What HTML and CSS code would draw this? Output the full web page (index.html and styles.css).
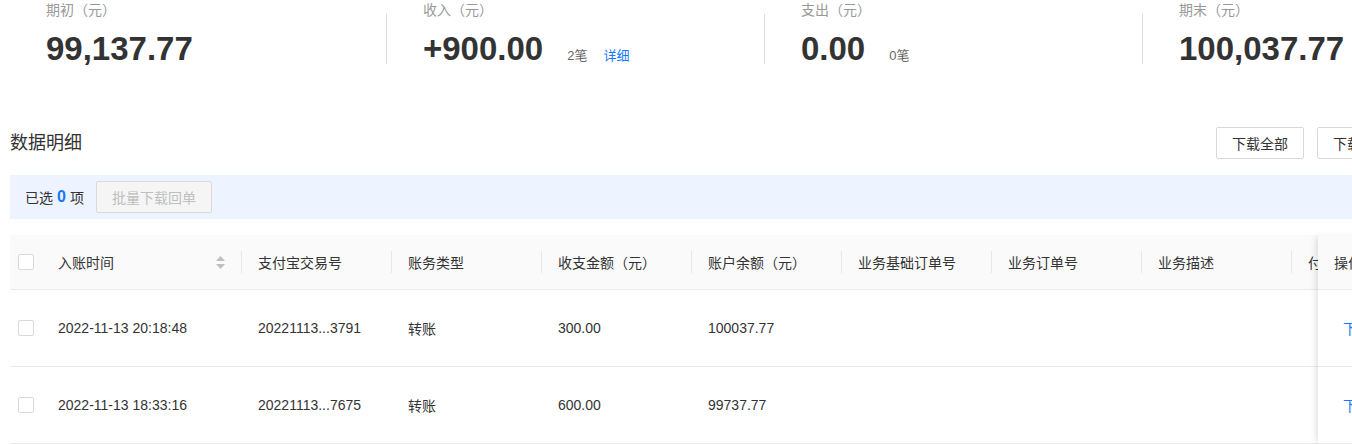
FILE: index.html
```html
<!DOCTYPE html>
<html lang="zh-CN">
<head>
    <meta charset="UTF-8">
    <meta name="viewport" content="width=device-width, initial-scale=1.0">
    <title>账单明细</title>
    <link rel="stylesheet" href="styles.css">
</head>
<body>

    <div class="page">
        <!-- Summary -->
        <div class="stats">
            <div class="stat">
                <div class="stat-label">期初（元）</div>
                <div class="stat-row"><span class="stat-value">99,137.77</span></div>
            </div>
            <div class="stat">
                <div class="stat-label">收入（元）</div>
                <div class="stat-row">
                    <span class="stat-value">+900.00</span>
                    <span class="stat-count">2笔</span>
                    <a class="link">详细</a>
                </div>
            </div>
            <div class="stat">
                <div class="stat-label">支出（元）</div>
                <div class="stat-row">
                    <span class="stat-value">0.00</span>
                    <span class="stat-count">0笔</span>
                </div>
            </div>
            <div class="stat">
                <div class="stat-label">期末（元）</div>
                <div class="stat-row"><span class="stat-value">100,037.77</span></div>
            </div>
        </div>

        <!-- Detail header -->
        <div class="section-head">
            <h2>数据明细</h2>
            <div class="actions">
                <button class="btn">下载全部</button>
                <button class="btn">下载回单</button>
            </div>
        </div>

        <div class="select-bar">
            <span>已选</span><span class="select-count">0</span><span>项</span>
            <button class="btn btn-disabled" disabled>批量下载回单</button>
        </div>

        <!-- Table -->
        <div class="table-wrap">
            <div class="table-main">
                <table>
                    <colgroup>
                        <col style="width: 32px">
                        <col style="width: 200px">
                        <col style="width: 150px">
                        <col style="width: 150px">
                        <col style="width: 150px">
                        <col style="width: 150px">
                        <col style="width: 150px">
                        <col style="width: 150px">
                        <col style="width: 150px">
                        <col style="width: 150px">
                    </colgroup>
                    <thead>
                        <tr>
                            <th class="cell-check"><span class="checkbox"></span></th>
                            <th><div class="th-cell">入账时间
                                <svg class="sorter" width="9" height="13" viewBox="0 0 9 13">
                                    <path d="M4.5 0 L9 5 L0 5 Z" fill="#bfbfbf"/>
                                    <path d="M0 8 L9 8 L4.5 13 Z" fill="#bfbfbf"/>
                                </svg>
                            </div></th>
                            <th><div class="th-cell">支付宝交易号</div></th>
                            <th><div class="th-cell">账务类型</div></th>
                            <th><div class="th-cell">收支金额（元）</div></th>
                            <th><div class="th-cell">账户余额（元）</div></th>
                            <th><div class="th-cell">业务基础订单号</div></th>
                            <th><div class="th-cell">业务订单号</div></th>
                            <th><div class="th-cell">业务描述</div></th>
                            <th><div class="th-cell">付款方信息</div></th>
                        </tr>
                    </thead>
                    <tbody>
                        <tr>
                            <td class="cell-check"><span class="checkbox"></span></td>
                            <td>2022-11-13 20:18:48</td>
                            <td>20221113...3791</td>
                            <td>转账</td>
                            <td>300.00</td>
                            <td>100037.77</td>
                            <td></td>
                            <td></td>
                            <td></td>
                            <td></td>
                        </tr>
                        <tr>
                            <td class="cell-check"><span class="checkbox"></span></td>
                            <td>2022-11-13 18:33:16</td>
                            <td>20221113...7675</td>
                            <td>转账</td>
                            <td>600.00</td>
                            <td>99737.77</td>
                            <td></td>
                            <td></td>
                            <td></td>
                            <td></td>
                        </tr>
                    </tbody>
                </table>
            </div>

            <!-- Fixed right column -->
            <div class="table-fixed">
                <table>
                    <thead>
                        <tr><th><div class="th-cell th-last">操作</div></th></tr>
                    </thead>
                    <tbody>
                        <tr><td class="cell-op"><a class="link">下载回单</a></td></tr>
                        <tr><td class="cell-op"><a class="link">下载回单</a></td></tr>
                    </tbody>
                </table>
            </div>
        </div>
    </div>

</body>
</html>
```

FILE: styles.css
```css
body {
    margin: 0;
    padding: 0;
    overflow: hidden;
    background-color: #fff;
    color: #333;
    font-family: "Liberation Sans", "Noto Sans CJK SC", sans-serif;
    font-size: 14px;
}
.page {
    width: 1395px;
    padding-left: 10px;
}
.link {
    color: #1677ff;
    cursor: pointer;
    text-decoration: none;
}

/* Summary */
.stats {
    display: flex;
    padding-top: 14px;
}
.stat {
    width: 378px;
    flex: none;
    box-sizing: border-box;
    display: flex;
    flex-direction: column;
    padding-left: 36px;
    border-left: 1px solid #ddd;
}
.stat:first-child {
    width: 376px;
    border-left: none;
}
.stat-label {
    margin-top: -14px;
    line-height: 20px;
    color: #999;
}
.stat-row {
    margin-top: 14px;
    display: flex;
    align-items: baseline;
    white-space: nowrap;
}
.stat-value {
    font-size: 33px;
    font-weight: bold;
    line-height: 30px;
    color: #333;
}
.stat-count {
    margin-left: 24px;
    font-size: 13px;
    color: #666;
}
.stat-row .link {
    margin-left: 16px;
    font-size: 13px;
}

/* Section head */
.section-head {
    margin-top: 63px;
    display: flex;
    justify-content: space-between;
    align-items: center;
}
.section-head h2 {
    margin: 0;
    font-size: 18px;
    font-weight: normal;
    line-height: 32px;
}
.actions {
    display: flex;
    gap: 13px;
}
.btn {
    height: 32px;
    padding: 0 15px;
    border: 1px solid #d9d9d9;
    border-radius: 2px;
    background-color: #fff;
    color: #333;
    font-family: inherit;
    font-size: 14px;
    cursor: pointer;
}
.btn-disabled {
    background-color: #f5f5f5;
    color: #bfbfbf;
    cursor: not-allowed;
    margin-left: 12px;
}

/* Selection bar */
.select-bar {
    margin-top: 16px;
    height: 44px;
    box-sizing: border-box;
    padding: 0 15px;
    display: flex;
    align-items: center;
    background-color: #edf4ff;
}
.select-count {
    margin: 0 4px;
    font-size: 16px;
    font-weight: bold;
    color: #1677ff;
}

/* Table */
.table-wrap {
    margin-top: 16px;
    display: flex;
}
.table-main {
    width: 1308px;
    flex: none;
    overflow: hidden;
}
.table-main table {
    width: 1432px;
}
table {
    border-collapse: collapse;
    table-layout: fixed;
}
th {
    height: 54px;
    padding: 0 0 0 16px;
    background-color: #fafafa;
    border-bottom: 1px solid #ebebeb;
    font-weight: normal;
    text-align: left;
    white-space: nowrap;
}
.th-cell {
    height: 22px;
    display: flex;
    align-items: center;
    justify-content: space-between;
    padding-right: 16px;
    border-right: 1px solid #e8e8e8;
}
.th-cell.th-last {
    border-right: none;
}
.sorter {
    display: block;
}
td {
    height: 76px;
    padding: 0 0 0 16px;
    border-bottom: 1px solid #ebebeb;
    white-space: nowrap;
    overflow: hidden;
}
.cell-check {
    padding-left: 8px;
}
.checkbox {
    display: block;
    width: 14px;
    height: 14px;
    border: 1px solid #d9d9d9;
    border-radius: 2px;
    background-color: #fff;
}
.table-fixed {
    flex: 1;
    position: relative;
    z-index: 1;
    background-color: #fff;
    box-shadow: -4px 0 6px -2px rgba(0, 0, 0, 0.12);
}
.table-fixed table {
    width: 100%;
}
.cell-op {
    padding-left: 25px;
}
```
